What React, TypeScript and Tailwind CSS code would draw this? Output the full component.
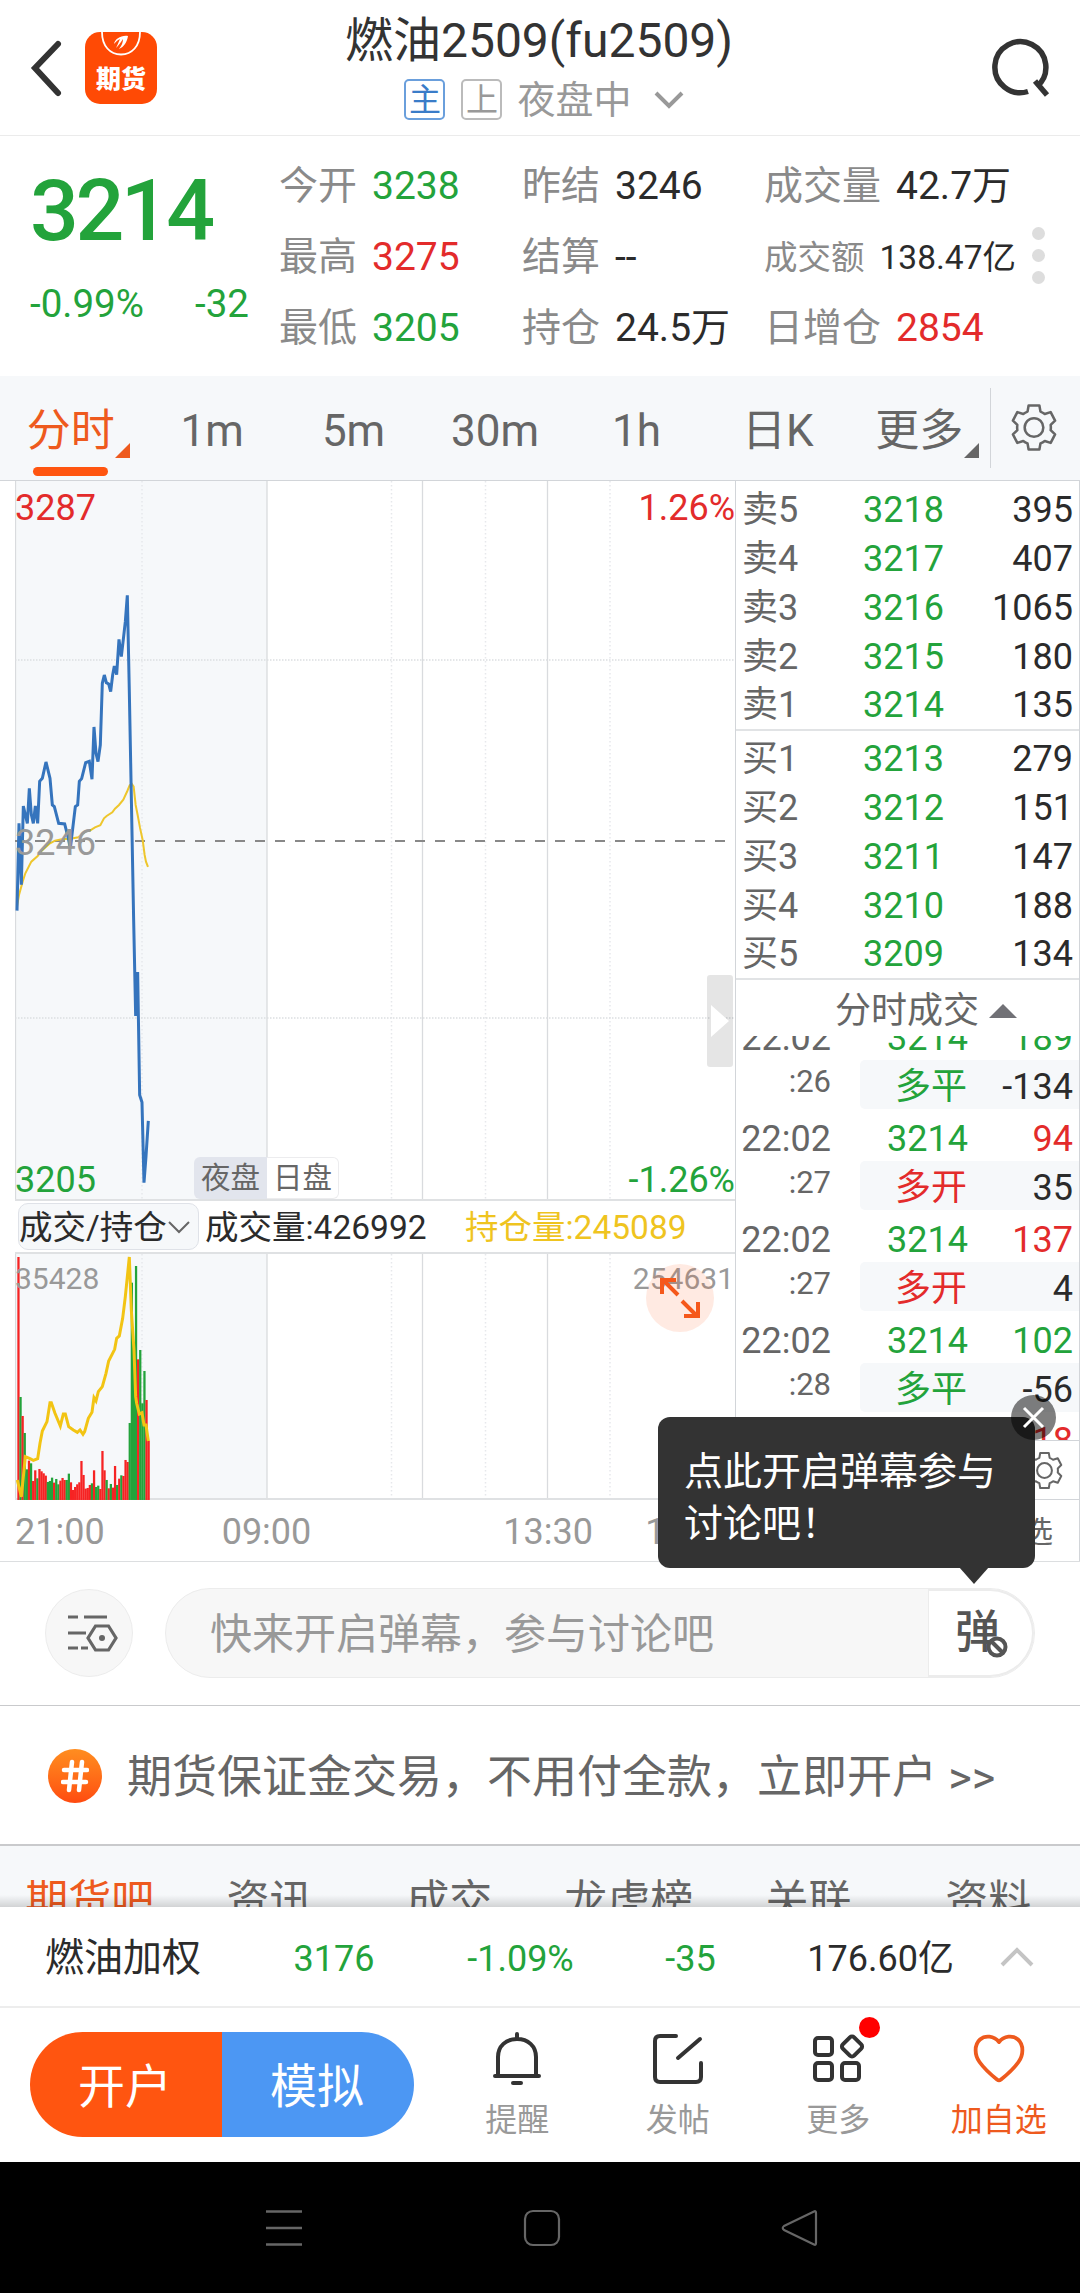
import React from 'react';
import clsx from 'clsx';

type Tone = 'up' | 'down' | 'plain';

const toneClass: Record<Tone, string> = {
  up: 'text-[#e32b2b]',
  down: 'text-[#23a33b]',
  plain: 'text-[#2b2b2b]',
};

const stats: { label: string; value: string; tone: Tone; small?: boolean }[] = [
  { label: '今开', value: '3238', tone: 'down' },
  { label: '昨结', value: '3246', tone: 'plain' },
  { label: '成交量', value: '42.7万', tone: 'plain' },
  { label: '最高', value: '3275', tone: 'up' },
  { label: '结算', value: '--', tone: 'plain' },
  { label: '成交额', value: '138.47亿', tone: 'plain', small: true },
  { label: '最低', value: '3205', tone: 'down' },
  { label: '持仓', value: '24.5万', tone: 'plain' },
  { label: '日增仓', value: '2854', tone: 'up' },
];

const periods = ['分时', '1m', '5m', '30m', '1h', '日K', '更多'];

const asks = [
  ['卖5', '3218', '395'],
  ['卖4', '3217', '407'],
  ['卖3', '3216', '1065'],
  ['卖2', '3215', '180'],
  ['卖1', '3214', '135'],
];

const bids = [
  ['买1', '3213', '279'],
  ['买2', '3212', '151'],
  ['买3', '3211', '147'],
  ['买4', '3210', '188'],
  ['买5', '3209', '134'],
];

const trades: { sec: string; qty: string; qtyTone: Tone; type: string; typeTone: Tone; delta: string }[] = [
  { sec: ':26', qty: '189', qtyTone: 'down', type: '多平', typeTone: 'down', delta: '-134' },
  { sec: ':27', qty: '94', qtyTone: 'up', type: '多开', typeTone: 'up', delta: '35' },
  { sec: ':27', qty: '137', qtyTone: 'up', type: '多开', typeTone: 'up', delta: '4' },
  { sec: ':28', qty: '102', qtyTone: 'down', type: '多平', typeTone: 'down', delta: '-56' },
];

const forumTabs = ['期货吧', '资讯', '成交', '龙虎榜', '关联', '资料'];

const priceLine =
  '51,1052 57,790 64,974 70,738 82,790 88,685 94,764 100,790 106,738 113,790 119,664 127,655 138,606 150,655 157,735 163,740 176,790 194,792 205,835 211,865 220,790 226,740 233,735 238,664 245,656 257,608 268,604 276,658 282,501 288,580 294,605 301,555 307,370 313,345 319,368 326,372 332,395 338,345 343,318 350,344 357,238 364,290 370,238 376,185 382,106 388,395 394,710 401,1080 407,1368 413,1236 419,1605 426,1627 432,1868 438,1790 445,1683';

const averageLine =
  '51,1040 57,1005 68,965 76,940 94,905 113,888 125,872 150,850 165,842 185,838 211,836 235,832 255,815 270,812 285,802 301,796 312,775 320,768 337,757 345,746 357,735 370,719 382,693 389,676 395,671 401,680 407,735 413,765 420,803 428,840 434,885 438,905 444,921';

const interestLine =
  '52,690 64,741 76,620 90,626 100,631 113,626 120,580 127,543 141,515 150,458 154,458 165,490 181,528 190,492 196,492 206,530 220,540 232,547 240,540 249,553 254,545 265,505 276,487 282,443 288,453 295,425 307,410 318,370 326,333 344,298 350,265 358,258 368,205 376,140 388,21 394,180 402,300 407,440 410,460 418,492 426,488 432,525 438,525 445,573';

// top edge of each one-minute bar, r = rising, g = falling
const volumeBars =
  '21r 441g 498r 549g 658g 632r 640g 693r 661r 685g 657r 664r 670r 677r 696g 693g 683g 698r 687g 703g 692r 684r 690r 690g 671g 697r 720r 711r 703r 697r 633r 675r 716r 714r 705r 700g 661r 711g 707g 717r 603r 661r 690g 715r 702g 713r 648r 705g 686r 676g 678r 630r 636r 519g 98g 300g 48g 328r 300g 460g 363g 450r 572r'
    .split(' ')
    .map(s => ({ top: parseInt(s, 10), up: s.endsWith('r') }));

function Gear({ className }: { className: string }) {
  return (
    <svg className={className} viewBox="0 0 46 50" fill="none" stroke="#666" strokeWidth="2.6" strokeLinejoin="round">
      <path d="M17.5 2.5H28.500L29.600 8.800Q32 9.700 34 11.300L40 9.300L44.500 18L40 22.300Q40.400 25 40 27.700L44.500 32L40 40.700L34 38.700Q32 40.300 29.600 41.200L28.500 47.500H17.500L16.400 41.200Q14 40.300 12 38.700L6 40.700L1.500 32L6 27.700Q5.600 25 6 22.300L1.500 18L6 9.300L12 11.300Q14 9.700 16.400 8.800Z" />
      <circle cx="23" cy="25" r="9.5" />
    </svg>
  );
}

function Header() {
  return (
    <header className="flex h-[136px] items-start justify-between border-b border-[#ebebeb] bg-white pl-[28px] pr-[27px]">
      <div className="flex w-[150px] items-center pt-[32px]">
        <svg className="h-[60px] w-[36px]" viewBox="0 0 36 60" fill="none">
          <path d="M30 6L7 30L30 55" stroke="#333" strokeWidth="6" strokeLinecap="round" />
        </svg>
        <div className="relative ml-[21px] flex h-[72px] w-[72px] justify-center overflow-hidden rounded-[15px] bg-[#ff4a05]">
          <svg className="absolute left-0 top-0 h-[30px] w-[72px]" viewBox="0 0 72 30" fill="none">
            <path d="M17 0C17 14 25 22.500 36 22.500S55 14 55 0" stroke="#fff" strokeWidth="1.8" />
            <path d="M29 12C30 7 36 3 43 4C42 10 39 15 34 17C37 13 38 10 38 7C36 10 33 14 31 16C33 12 34 9 35 7C32 8 31 10 29 12Z" fill="#fff" />
          </svg>
          <span className="mt-[35px] text-[25px] font-black leading-none text-white">期货</span>
        </div>
      </div>
      <div className="flex flex-col items-center">
        <h1 className="mt-[17px] pr-[3px] text-[48px] leading-none text-[#333]">燃油2509(fu2509)</h1>
        <div className="ml-[7px] mt-[14px] flex h-[41px] items-center text-[38px] leading-none text-[#999]">
          <span className="flex h-[41px] w-[41px] items-center justify-center rounded-[5px] border-2 border-[#6a9fdc] text-[32px] text-[#3a7cc8]">主</span>
          <span className="ml-[16px] flex h-[41px] w-[41px] items-center justify-center rounded-[5px] border-2 border-[#bbb] text-[32px]">上</span>
          <span className="ml-[15px] pt-px">夜盘中</span>
          <svg className="ml-[22px] h-[18px] w-[30px]" viewBox="0 0 30 18" fill="none">
            <path d="M2 2L15 15L28 2" stroke="#999" strokeWidth="4" />
          </svg>
        </div>
      </div>
      <div className="flex w-[150px] justify-end pt-[37px]">
        <svg className="h-[64px] w-[64px]" viewBox="0 0 64 64" fill="none" stroke="#333" strokeWidth="5.5">
          <path d="M39 54.500A25.500 25.500 0 1 1 48 49.500" />
          <path d="M46 44L58 58" />
        </svg>
      </div>
    </header>
  );
}

function QuotePanel() {
  return (
    <section className="flex h-[240px] bg-white">
      <div className="w-[278px] pl-[30px] text-[#23a33b]">
        <div className="mt-[32px] text-[86px] font-medium leading-none tracking-[-3.500px]">3214</div>
        <div className="mt-[31px] flex justify-between pr-[29px] text-[38.500px] leading-none">
          <span>-0.99%</span>
          <span>-32</span>
        </div>
      </div>
      <div className="grid w-[748px] grid-cols-[243px_242px_1fr] grid-rows-[71px_71px_71px] pl-px pt-[15px]">
        {stats.map(s => (
          <div key={s.label} className={clsx('flex items-center gap-[15px] whitespace-nowrap leading-none', s.small ? 'text-[33.500px]' : 'text-[39px]')}>
            <span className="text-[#8a8a8a]">{s.label}</span>
            <span className={toneClass[s.tone]}>{s.value}</span>
          </div>
        ))}
      </div>
      <div className="ml-[6px] flex flex-col gap-[9px] pt-[91px]">
        <i className="h-[13px] w-[13px] rounded-full bg-[#ddd]" />
        <i className="h-[13px] w-[13px] rounded-full bg-[#ddd]" />
        <i className="h-[13px] w-[13px] rounded-full bg-[#ddd]" />
      </div>
    </section>
  );
}

function PeriodTabs() {
  return (
    <nav className="flex h-[105px] border-b border-[#d2d5d9] bg-[#f6f8fa]">
      <div className="flex w-[990px]">
        {periods.map((p, i) => (
          <div key={p} className={clsx('relative flex flex-1 items-center justify-center pt-[6px] text-[44px] leading-none', i === 0 ? 'text-[#ee5a1e]' : 'text-[#666]')}>
            {p}
            {i === 0 && <i className="absolute bottom-[4px] left-[33px] h-[9px] w-[75px] rounded-full bg-[#ff5510]" />}
            {(i === 0 || i === 6) && (
              <svg className="absolute right-[11px] top-[67px] h-[15px] w-[15px]" viewBox="0 0 15 15">
                <path d="M15 0V15H0Z" fill="currentColor" />
              </svg>
            )}
          </div>
        ))}
      </div>
      <div className="mt-[12px] h-[80px] border-l border-[#d2d5d9] pl-[20px] pt-[15px]">
        <Gear className="h-[49px] w-[46px]" />
      </div>
    </nav>
  );
}

function GridLines({ height }: { height: number }) {
  return (
    <g>
      <rect x="0" y="0" width="252" height={height} fill="#f6f8fa" />
      {[0.5, 252, 407.5, 532.5].map(x => (
        <line key={x} x1={x} x2={x} y1="0" y2={height} stroke="#d9dbde" strokeWidth="1.3" />
      ))}
      {[127, 376.5, 470.5, 595].map(x => (
        <line key={x} x1={x} x2={x} y1="0" y2={height} stroke="#e6e8eb" strokeWidth="1.5" strokeDasharray="1.500 2.500" />
      ))}
    </g>
  );
}

function PriceChart() {
  return (
    <div className="relative h-[720px] border-b-2 border-[#dfe1e3] text-[36px] leading-none">
      <svg className="block h-[718px] w-[720px]" viewBox="0 0 720 718" fill="none">
        <GridLines height={718} />
        <line x1="0" x2="720" y1="179" y2="179" stroke="#dcdee1" strokeWidth="1.5" strokeDasharray="1.500 1.500" />
        <line x1="0" x2="720" y1="537" y2="537" stroke="#dcdee1" strokeWidth="1.5" strokeDasharray="1.500 1.500" />
        <line x1="0" x2="720" y1="360" y2="360" stroke="#888" strokeWidth="1.8" strokeDasharray="10 10" />
        <g transform="translate(-15 79) scale(.3333)">
          <polyline points={averageLine} stroke="#eec62c" strokeWidth="6" />
          <polyline points={priceLine} stroke="#3574bd" strokeWidth="9" />
        </g>
      </svg>
      <span className="absolute left-0 top-[9px] text-[#e32b2b]">3287</span>
      <span className="absolute right-0 top-[9px] text-[#e32b2b]">1.26%</span>
      <span className="absolute left-0 top-[344px] text-[#999]">3246</span>
      <span className="absolute bottom-px left-0 text-[#23a33b]">3205</span>
      <span className="absolute bottom-px right-0 text-[#23a33b]">-1.26%</span>
      <div className="absolute bottom-0 left-[179px] flex h-[42px] text-[29.500px] text-[#666]">
        <span className="flex w-[73px] items-center justify-center rounded-l-[6px] bg-[#e2e5ed] pt-[2px]">夜盘</span>
        <span className="flex w-[72px] items-center justify-center rounded-r-[6px] border border-l-0 border-[#ececee] bg-white pt-[2px]">日盘</span>
      </div>
      <div className="absolute right-[2px] top-[494px] flex h-[92px] w-[26px] items-center justify-center rounded-[3px] bg-black/10">
        <svg className="h-[32px] w-[18px]" viewBox="0 0 18 32">
          <path d="M0 0L18 16L0 32Z" fill="#fff" />
        </svg>
      </div>
    </div>
  );
}

function VolumeChart() {
  return (
    <>
      <div className="flex h-[53px] items-center border-b-2 border-[#dfe1e3] text-[33.500px] leading-none text-[#2b2b2b]">
        <div className="ml-[3px] flex h-[47px] w-[181px] items-center rounded-[10px] border border-[#dfe2e8] bg-[#f6f8fa] pt-[2px]">
          成交/持仓
          <svg className="ml-px h-[13px] w-[22px]" viewBox="0 0 22 13" fill="none">
            <path d="M1 1L11 11L21 1" stroke="#666" strokeWidth="2" />
          </svg>
        </div>
        <span className="ml-[6px] w-[260px] pt-[2px]">成交量:426992</span>
        <span className="pt-[2px] text-[#efc41f]">持仓量:245089</span>
      </div>
      <div className="relative h-[246px] border-b-2 border-[#dfe1e3] text-[30px] leading-none text-[#999]">
        <svg className="block h-[246px] w-[720px]" viewBox="0 0 720 246" fill="none">
          <GridLines height={244} />
          <g transform="translate(-15 -4) scale(.3333)">
            {volumeBars.map((b, i) => (
              <rect key={i} x={52 + i * 6.3} y={b.top} width="6.8" height={750 - b.top} fill={b.up ? '#f62323' : '#23a33b'} />
            ))}
            <polyline points={interestLine} stroke="#f2c413" strokeWidth="9" />
          </g>
        </svg>
        <span className="absolute left-0 top-[10px]">35428</span>
        <span className="absolute right-px top-[10px]">254631</span>
        <div className="absolute right-[21px] top-[10px] h-[68px] w-[68px] rounded-full bg-[#ff5510]/12">
          <svg className="h-[68px] w-[68px]" viewBox="0 0 68 68" fill="none" stroke="#f5581b" strokeWidth="4">
            <path d="M32 31L17 16M16 30V16H30" />
            <path d="M36 37L51 52M52 38V52H38" />
          </svg>
        </div>
      </div>
    </>
  );
}

function BookRows({ rows }: { rows: string[][] }) {
  return (
    <>
      {rows.map(([label, price, qty]) => (
        <div key={label} className="flex h-[48.750px] items-center pl-[6px] pr-[6px]">
          <span className="w-[121px] text-[#666]">{label}</span>
          <span className="flex-1 text-[#23a33b]">{price}</span>
          <span className="text-[#2b2b2b]">{qty}</span>
        </div>
      ))}
    </>
  );
}

function OrderBook() {
  return (
    <aside className="flex w-[345px] flex-col border-x border-[#d2d5d9] text-[36px] leading-none">
      <div className="h-[250px] border-b-2 border-[#e1e3e5] pt-[5px]">
        <BookRows rows={asks} />
      </div>
      <div className="h-[249px] border-b-2 border-[#e1e3e5] pt-[4px]">
        <BookRows rows={bids} />
      </div>
      <div className="flex h-[56px] items-center pl-[99px] pt-[5px] text-[#666]">
        分时成交
        <svg className="ml-[10px] h-[14px] w-[28px]" viewBox="0 0 28 14">
          <path d="M14 0L28 14H0Z" fill="#717176" />
        </svg>
      </div>
      <div className="h-[405px] overflow-hidden border-b border-[#d2d5d9]">
        <div className="-mt-[25px]">
          {trades.map((t, i) => (
            <div key={i} className="grid h-[101px] grid-cols-[95px_29px_1fr] grid-rows-[49px_49px] items-center text-right">
              <span className="pt-[4px] text-[#666]">22:02</span>
              <span />
              <div className="flex justify-between pl-[27px] pr-[6px] pt-[4px]">
                <span className="text-[#23a33b]">3214</span>
                <span className={toneClass[t.qtyTone]}>{t.qty}</span>
              </div>
              <span className="pb-[6px] text-[31px] text-[#666]">{t.sec}</span>
              <span />
              <div className="flex h-[49px] items-center justify-between rounded-l-[5px] bg-[#f6f8fa] pl-[35px] pr-[6px] pt-[4px]">
                <span className={toneClass[t.typeTone]}>{t.type}</span>
                <span className="text-[#2b2b2b]">{t.delta}</span>
              </div>
            </div>
          ))}
          <div className="flex h-[52px] items-center justify-end pr-[6px] text-[#e32b2b]">18</div>
        </div>
      </div>
      <div className="flex h-[59px] items-center justify-end border-b border-[#d2d5d9] pr-[15px]">
        <Gear className="h-[39px] w-[39px]" />
      </div>
      <div className="flex flex-1 items-center justify-end pr-[26px] pt-[3px] text-[30px] text-[#666]">选</div>
    </aside>
  );
}

function Tooltip() {
  return (
    <div className="absolute left-[658px] top-[936px] z-10 h-[151px] w-[377px] rounded-[12px] bg-[#333] pl-[26px] pt-[29px] text-[39px] leading-[52px] text-white">
      点此开启弹幕参与
      <br />
      讨论吧！
      <svg className="absolute left-[301px] top-[150px] h-[17px] w-[30px]" viewBox="0 0 30 17">
        <path d="M0 0H30L15 17Z" fill="#333" />
      </svg>
      <svg className="absolute -right-[21px] -top-[22px] h-[45px] w-[45px]" viewBox="0 0 45 45" fill="none">
        <circle cx="22.500" cy="22.500" r="22.500" fill="#000" fillOpacity=".5" />
        <path d="M13 13L32 32M32 13L13 32" stroke="#fff" strokeWidth="3" />
      </svg>
    </div>
  );
}

function CommentBar() {
  return (
    <section className="flex h-[144px] border-b border-[#c9cacc] bg-white pl-[45px] pt-[26px]">
      <div className="mt-px flex h-[88px] w-[88px] items-center justify-center rounded-full border border-[#ececec] bg-[#f7f7f7]">
        <svg className="ml-[6px] h-[50px] w-[52px]" viewBox="0 0 52 50" fill="none" stroke="#666" strokeWidth="3.200">
          <path d="M2 9H12M18 9H41M2 25H20M2 40H12M15 40H22" />
          <path d="M29.500 18H42.500L50 30L42.500 42H29.500L22 30Z" />
          <circle cx="36" cy="30" r="3" fill="#666" stroke="none" />
        </svg>
      </div>
      <div className="ml-[32px] flex h-[90px] w-[870px] items-center overflow-hidden rounded-full border border-[#ececec] bg-[#f7f7f7] leading-none">
        <span className="flex-1 pl-[44px] pt-[4px] text-[42px] text-[#999]">快来开启弹幕，参与讨论吧</span>
        <span className="relative flex h-[88px] w-[106px] items-center rounded-r-full border-2 border-l border-[#ececec] bg-white pb-[2px] pl-[26px] text-[45px] font-medium text-[#555]">
          弹
          <svg className="absolute left-[56px] top-[44px] h-[24px] w-[24px]" viewBox="0 0 24 24" fill="none">
            <circle cx="12" cy="12" r="8.500" fill="#fff" stroke="#555" strokeWidth="4" />
            <path d="M6 6L18 18" stroke="#555" strokeWidth="4" />
          </svg>
        </span>
      </div>
    </section>
  );
}

function Banner() {
  return (
    <section className="flex h-[140px] items-center border-b-2 border-[#c9cacc] bg-white pl-[48px]">
      <div className="mt-px flex h-[54px] w-[54px] items-center justify-center rounded-full bg-linear-to-b from-[#ff8d20] to-[#ff4a10]">
        <svg className="h-[34px] w-[28px]" viewBox="0 0 28 34" fill="none" stroke="#fff" strokeWidth="4.500" strokeLinecap="round">
          <path d="M11 3L8 31M21 3L18 31M3 11H26M2 23H25" />
        </svg>
      </div>
      <span className="ml-[25px] whitespace-nowrap pt-[4px] text-[45px] leading-none text-[#666]">期货保证金交易，不用付全款，立即开户 &gt;&gt;</span>
    </section>
  );
}

function ForumTabs() {
  return (
    <nav className="relative flex h-[61px] overflow-hidden bg-[#f6f8fa] pr-[2px] pt-[34px] text-[43px] leading-none text-[#666]">
      {forumTabs.map((t, i) => (
        <span key={t} className={clsx('flex-1 text-center', i === 0 && 'text-[#ee5a1e]')}>
          {t}
        </span>
      ))}
      <i className="absolute inset-x-0 bottom-0 h-[12px] bg-linear-to-b from-transparent to-black/15" />
    </nav>
  );
}

function IndexRow() {
  return (
    <section className="flex h-[101px] items-center border-b-2 border-[#ededed] bg-white pl-[45px] pt-[4px] text-[36px] leading-none text-[#23a33b]">
      <span className="w-[200px] text-[39px] text-[#2b2b2b]">燃油加权</span>
      <span className="w-[178px] text-center">3176</span>
      <span className="w-[195px] text-center">-1.09%</span>
      <span className="w-[145px] text-center">-35</span>
      <span className="w-[191px] text-right text-[#2b2b2b]">176.60亿</span>
      <svg className="mb-[3px] ml-[46px] h-[20px] w-[34px]" viewBox="0 0 34 20" fill="none">
        <path d="M2 18L17 3L32 18" stroke="#c4c4c4" strokeWidth="4" />
      </svg>
    </section>
  );
}

function ActionItem({ label, active, children }: { label: string; active?: boolean; children: React.ReactNode }) {
  return (
    <div className="flex flex-1 flex-col items-center pt-[23px]">
      <svg
        className={clsx('h-[56px] w-[56px]', active ? 'text-[#ee5a1e]' : 'text-[#333]')}
        viewBox="0 0 56 56"
        fill="none"
        stroke="currentColor"
        strokeWidth="4"
        strokeLinecap="round"
        strokeLinejoin="round"
      >
        {children}
      </svg>
      <span className={clsx('mt-[17px] text-[32px] leading-none', active ? 'text-[#ee5a1e]' : 'text-[#999]')}>{label}</span>
    </div>
  );
}

function ActionBar() {
  return (
    <section className="flex h-[154px] bg-white pl-[30px]">
      <div className="mt-[24px] flex h-[105px] w-[384px] overflow-hidden rounded-full text-[47px] leading-none text-white">
        <button className="flex-1 bg-[#ff5510] pr-[2px] pt-[4px]">开户</button>
        <button className="flex-1 bg-[#4c97f3] pr-[2px] pt-[4px]">模拟</button>
      </div>
      <div className="ml-[23px] flex w-[642px]">
        <ActionItem label="提醒">
          <path d="M28 3V8M9 44V26C9 15 17 8 28 8S47 15 47 26V44M6 45H50" />
          <path d="M24 52H32" />
        </ActionItem>
        <ActionItem label="发帖">
          <path d="M26 5H10Q5 5 5 10V46Q5 51 10 51H46Q51 51 51 46V32" />
          <path d="M28 27L50 8" />
        </ActionItem>
        <div className="relative flex flex-1">
          <ActionItem label="更多">
            <rect x="5" y="7" width="17" height="17" rx="3" />
            <rect x="5" y="32" width="17" height="17" rx="3" />
            <rect x="32" y="32" width="17" height="17" rx="3" />
            <rect x="34" y="7.500" width="16" height="16" rx="3" transform="rotate(45 42 15.500)" />
          </ActionItem>
          <i className="absolute left-[101px] top-[9px] h-[21px] w-[21px] rounded-full bg-[#ff0000]" />
        </div>
        <ActionItem label="加自选" active>
          <path d="M28 11C23 4.500 14 4 9 8.500C3 14 3.500 24 8.500 31C13.500 38 21 44.500 26 48.500Q28 50 30 48.500C35 44.500 42.500 38 47.500 31C52.500 24 53 14 47 8.500C42 4 33 4.500 28 11Z" strokeWidth="3.800" />
        </ActionItem>
      </div>
    </section>
  );
}

function SystemNav() {
  return (
    <footer className="flex h-[131px] items-center bg-black pl-[264px]">
      <svg className="h-[40px] w-[40px]" viewBox="0 0 40 40" fill="none" stroke="#666" strokeWidth="2.500">
        <path d="M2 3.500H38M2 20H38M2 36.500H38" />
      </svg>
      <svg className="ml-[218px] h-[40px] w-[40px]" viewBox="0 0 40 40" fill="none" stroke="#666" strokeWidth="2.200">
        <rect x="3" y="3" width="34" height="34" rx="8" />
      </svg>
      <svg className="ml-[218px] h-[40px] w-[40px]" viewBox="0 0 40 40" fill="none" stroke="#666" strokeWidth="2.200" strokeLinejoin="round">
        <path d="M34 3.500Q36 2.500 36 5V35Q36 37.500 34 36.500L4 22Q1.500 20 4 18Z" />
      </svg>
    </footer>
  );
}

export default function App() {
  return (
    <div className="h-[2293px] w-[1080px] overflow-hidden bg-white font-['Roboto','Noto_Sans_CJK_SC',sans-serif]">
      <Header />
      <QuotePanel />
      <PeriodTabs />
      <main className="relative flex h-[1081px] border-b border-[#dcdee0] bg-white pl-[15px]">
        <div className="w-[720px]">
          <PriceChart />
          <VolumeChart />
          <div className="flex h-[61px] items-center pt-[3px] text-[36px] leading-none text-[#999]">
            <span>21:00</span>
            <span className="ml-[117px]">09:00</span>
            <span className="ml-[192px]">13:30</span>
            <span className="ml-auto">15:00</span>
          </div>
        </div>
        <OrderBook />
        <Tooltip />
      </main>
      <CommentBar />
      <Banner />
      <ForumTabs />
      <IndexRow />
      <ActionBar />
      <SystemNav />
    </div>
  );
}
